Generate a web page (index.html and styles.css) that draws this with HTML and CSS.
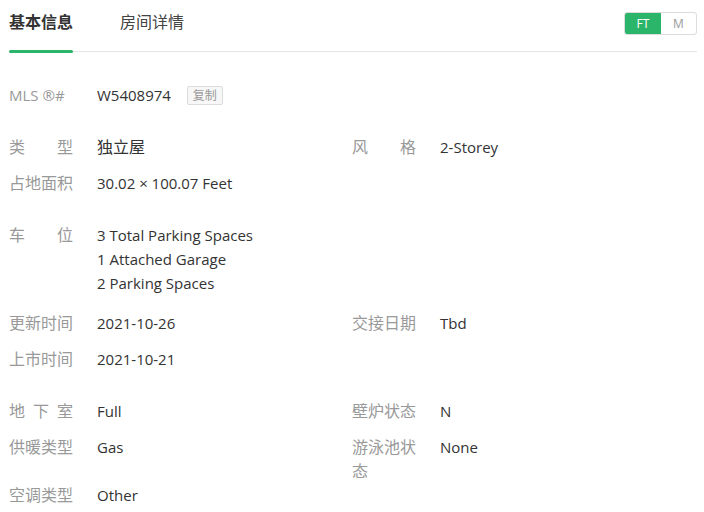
FILE: index.html
```html
<!DOCTYPE html>
<html>
<head>
    <meta charset=utf-8 />
    <link rel="stylesheet" href="styles.css">
</head>
<body>
    <div class="page">
      <div class="tabbar">
        <span class="tab active">基本信息</span>
        <span class="tab">房间详情</span>
        <span class="units">
          <span class="unit on">FT</span><span class="unit">M</span>
        </span>
      </div>

      <div class="details">
        <div class="group">
          <div class="row">
            <div class="item">
              <span class="label latin">MLS ®#</span>
              <span class="value">W5408974 <span class="copy">复制</span></span>
            </div>
          </div>
        </div>

        <div class="group">
          <div class="row">
            <div class="item"><span class="label">类型</span><span class="value cjk">独立屋</span></div>
            <div class="item"><span class="label">风格</span><span class="value">2-Storey</span></div>
          </div>
          <div class="row">
            <div class="item"><span class="label">占地面积</span><span class="value">30.02 × 100.07 Feet</span></div>
          </div>
        </div>

        <div class="group">
          <div class="row">
            <div class="item">
              <span class="label">车位</span>
              <span class="value">3 Total Parking Spaces<br>1 Attached Garage<br>2 Parking Spaces</span>
            </div>
          </div>
        </div>

        <div class="group">
          <div class="row">
            <div class="item"><span class="label">更新时间</span><span class="value">2021-10-26</span></div>
            <div class="item"><span class="label">交接日期</span><span class="value">Tbd</span></div>
          </div>
          <div class="row">
            <div class="item"><span class="label">上市时间</span><span class="value">2021-10-21</span></div>
          </div>
        </div>

        <div class="group">
          <div class="row">
            <div class="item"><span class="label">地下室</span><span class="value">Full</span></div>
            <div class="item"><span class="label">壁炉状态</span><span class="value">N</span></div>
          </div>
          <div class="row">
            <div class="item"><span class="label">供暖类型</span><span class="value">Gas</span></div>
            <div class="item"><span class="label">游泳池状态</span><span class="value">None</span></div>
          </div>
          <div class="row">
            <div class="item"><span class="label">空调类型</span><span class="value">Other</span></div>
          </div>
        </div>
      </div>
    </div>
</body>
</html>
```

FILE: styles.css
```css
body {
    margin: 0;
    background-color: #fff;
    color: #333;
    font-family: "Open Sans", "Noto Sans CJK SC", sans-serif;
}

.page {
    padding: 0 7px 0 9px;
}

.tabbar {
    display: flex;
    align-items: flex-start;
    height: 51px;
    border-bottom: 1px solid #e6e6e6;
}

.tab {
    position: relative;
    margin-top: 10px;
    margin-right: 47px;
    font-size: 16px;
    line-height: 24px;
    color: #444;
}

.tab.active {
    font-weight: 600;
    color: #333;
}

.tab.active::after {
    content: "";
    position: absolute;
    left: 0;
    right: 0;
    top: 40px;
    height: 3px;
    border-radius: 2px;
    background-color: #2bb56a;
}

.units {
    display: flex;
    margin-left: auto;
    margin-top: 12px;
    height: 23px;
    border: 1px solid #dcdcdc;
    border-radius: 3px;
    box-sizing: border-box;
    overflow: hidden;
}

.unit {
    width: 35px;
    font-size: 12px;
    line-height: 21px;
    text-align: center;
    color: #999;
}

.unit.on {
    background-color: #2bb56a;
    color: #fff;
    width: 36px;
}

.details {
    padding-top: 31px;
}

.group {
    margin-bottom: 16px;
}

.row {
    display: grid;
    grid-template-columns: 343px 1fr;
    min-height: 36px;
}

.item {
    display: flex;
    align-items: flex-start;
    line-height: 24px;
}

.label {
    flex: none;
    width: 64px;
    margin-right: 24px;
    font-size: 16px;
    color: #999;
    text-align: justify;
    text-align-last: justify;
}

.label.latin {
    font-size: 15px;
    text-align-last: left;
}

.value {
    font-size: 15px;
    color: #333;
}

.value.cjk {
    font-size: 16px;
}

.copy {
    display: inline-block;
    margin-left: 12px;
    padding: 0 5px;
    font-size: 12px;
    line-height: 17px;
    color: #999;
    background-color: #f7f7f7;
    border: 1px solid #dcdcdc;
    border-radius: 2px;
    vertical-align: 1px;
}
```
